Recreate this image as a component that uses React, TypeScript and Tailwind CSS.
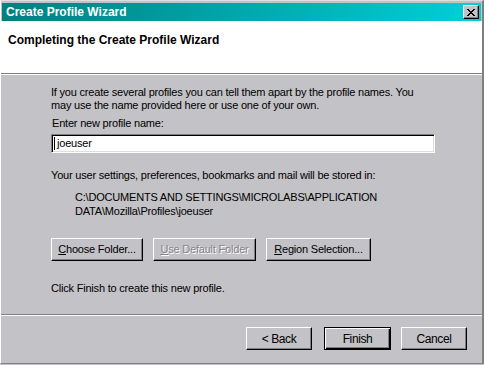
import React from "react";

const font = { fontFamily: '"Liberation Sans", Arial, sans-serif' } as const;

function Btn({ children, w, def, disabled, cls = "" }: { children: React.ReactNode; w: string; def?: boolean; disabled?: boolean; cls?: string }) {
  const base = def
    ? "border border-black shadow-[inset_1px_1px_#fff,inset_-1px_-1px_#000,inset_-2px_-2px_#808080]"
    : "border border-t-white border-l-white border-r-black border-b-black shadow-[inset_-1px_-1px_#808080]";
  return (
    <div
      className={`${w} h-[23px] flex items-center justify-center bg-[#c3c2c6] text-[11px] ${base} ${cls} ${
        disabled ? "text-[#868589] [text-shadow:1px_1px_0_#fff]" : "text-black"
      }`}
    >
      {children}
    </div>
  );
}

export default function App() {
  return (
    <div style={font} className="w-[484px] h-[365px] bg-[#c3c2c6] overflow-hidden">
      <div className="w-[484px] h-[364px] flex flex-col border-t border-t-[#dfdfdf] border-l border-l-white border-r-2 border-r-[#808080] border-b border-b-[#808080]">
        <div className="mt-[2px] mx-[1px] h-[18px] flex items-center justify-between bg-gradient-to-r from-[#008080] via-[#00a8ac] to-[#00d0d8] pl-[4px] pr-[2px]">
          <span className="text-white font-bold text-[12px] leading-[14px]">Create Profile Wizard</span>
          <div className="w-[16px] h-[14px] flex items-center justify-center bg-[#c3c2c6] border border-t-white border-l-white border-r-black border-b-black shadow-[inset_-1px_-1px_#808080]">
            <svg width="8" height="7" viewBox="0 0 8 7" shapeRendering="crispEdges">
              <path d="M0 0h2v1H0zM6 0h2v1H6zM1 1h2v1H1zM5 1h2v1H5zM2 2h4v1H2zM3 3h2v1H3zM2 4h4v1H2zM1 5h2v1H1zM5 5h2v1H5zM0 6h2v1H0zM6 6h2v1H6z" fill="#000" />
            </svg>
          </div>
        </div>
        <div className="h-[53px] bg-white pl-[7px] pt-[12px] border-b border-b-[#808080]">
          <div className="font-bold text-[12px] leading-[14px] text-black">Completing the Create Profile Wizard</div>
        </div>
        <div className="h-px bg-white" />
        <div className="flex flex-col pl-[50px] pt-[11px] text-[11px] tracking-[-0.2px] text-black">
          <div className="leading-[13px] w-[372px]">
            If you create several profiles you can tell them apart by the profile names. You may use the name provided here or use one of your own.
          </div>
          <div className="leading-[13px] mt-[5px] pl-px">Enter new profile name:</div>
          <div className="mt-[4px] w-[384px] h-[19px] bg-white flex items-center pl-[2px] border border-t-[#808080] border-l-[#808080] border-b-white border-r-white shadow-[inset_1px_1px_#000,inset_-1px_-1px_#dfdfdf]">
            <span className="w-px h-[13px] bg-black mr-[2px]" />
            <span className="leading-[13px]">joeuser</span>
          </div>
          <div className="leading-[13px] mt-[16px]">Your user settings, preferences, bookmarks and mail will be stored in:</div>
          <div className="leading-[14px] mt-[8px] pl-[24px] w-[340px]">
            <div>C:\DOCUMENTS AND SETTINGS\MICROLABS\APPLICATION</div>
            <div>DATA\Mozilla\Profiles\joeuser</div>
          </div>
          <div className="flex gap-[10px] mt-[20px]">
            <Btn w="w-[92px]"><span><u>C</u>hoose Folder...</span></Btn>
            <Btn w="w-[103px]" disabled><span><u>U</u>se Default Folder</span></Btn>
            <Btn w="w-[105px]"><span><u>R</u>egion Selection...</span></Btn>
          </div>
          <div className="leading-[13px] mt-[21px]">Click Finish to create this new profile.</div>
        </div>
        <div className="mt-[19px] h-px bg-[#808080]" />
        <div className="h-px bg-white" />
        <div className="flex justify-end gap-[10px] pr-[15px] mt-[11px]">
          <Btn w="w-[66px]" cls="mr-[2px]"><span className="text-[12px] tracking-[-0.4px]">&lt; Back</span></Btn>
          <Btn w="w-[67px]" def><span className="text-[12px] tracking-[-0.4px]">Finish</span></Btn>
          <Btn w="w-[66px]"><span className="text-[12px] tracking-[-0.4px]">Cancel</span></Btn>
        </div>
      </div>
    </div>
  );
}
